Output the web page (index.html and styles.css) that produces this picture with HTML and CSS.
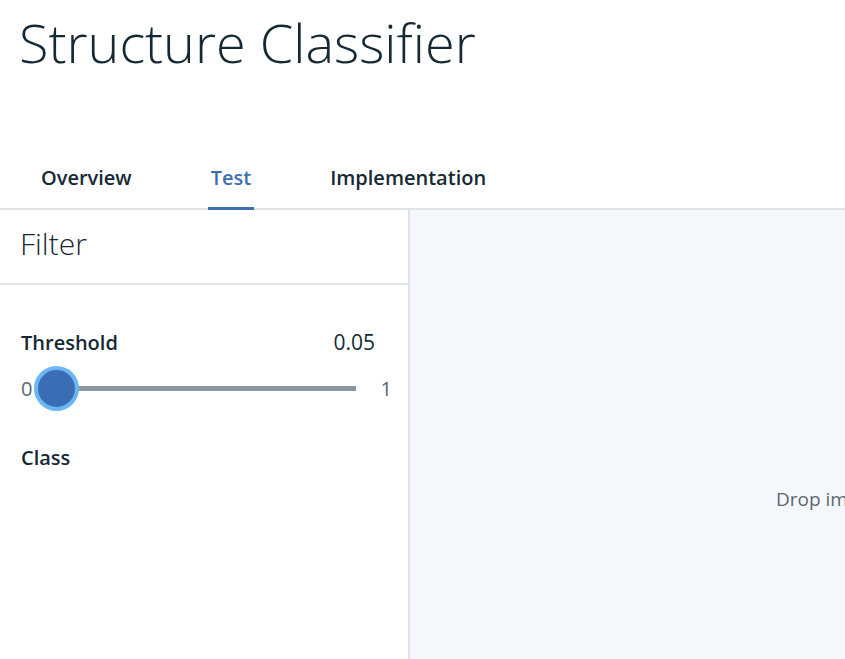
FILE: index.html
```html
<!DOCTYPE html>
<html lang="en">
<head>
<meta charset="utf-8">
<title>Structure Classifier</title>
<link rel="stylesheet" href="styles.css">
</head>
<body>
<div class="page">
  <h1 class="title">Structure Classifier</h1>
  <nav class="tabs">
    <a class="tab">Overview</a>
    <a class="tab tab-active">Test</a>
    <a class="tab">Implementation</a>
  </nav>
  <main class="main">
    <aside class="panel">
      <div class="panel-head">Filter</div>
      <div class="panel-body">
        <div class="field-row">
          <span class="field-label">Threshold</span>
          <span class="field-value">0.05</span>
        </div>
        <div class="slider">
          <span class="slider-min">0</span>
          <div class="slider-track">
            <span class="slider-thumb"></span>
          </div>
          <span class="slider-max">1</span>
        </div>
        <div class="field-label class-label">Class</div>
      </div>
    </aside>
    <section class="dropzone">
      <span class="drop-text">Drop image here</span>
    </section>
  </main>
</div>
</body>
</html>
```

FILE: styles.css
```css
html, body {
  margin: 0;
  padding: 0;
  background: #ffffff;
  overflow: hidden;
}
body {
  font-family: "Open Sans", "Noto Sans", sans-serif;
  color: #152935;
  width: 845px;
  height: 659px;
}
.page {
  display: flex;
  flex-direction: column;
  height: 659px;
}
.title {
  margin: 0;
  padding: 6px 0 0 19px;
  height: 138px;
  box-sizing: border-box;
  font-family: "Open Sans", sans-serif;
  font-weight: 300;
  font-size: 54px;
  line-height: 72px;
  letter-spacing: 0;
  color: #152935;
}
.tabs {
  display: flex;
  gap: 73px;
  padding-left: 38px;
  height: 70px;
  border-bottom: 2px solid #dfe3e6;
  box-sizing: content-box;
}
.tab {
  display: flex;
  align-items: center;
  padding: 10px 3px 0;
  font-size: 20px;
  font-weight: 600;
  color: #152935;
  border-bottom: 3px solid transparent;
  margin-bottom: -2px;
}
.tab-active {
  color: #3d70b2;
  border-bottom-color: #3d70b2;
}
.main {
  flex: 1;
  display: flex;
}
.panel {
  width: 408px;
  flex: none;
  border-right: 2px solid #dfe3e6;
  background: #ffffff;
}
.panel-head {
  height: 73px;
  border-bottom: 2px solid #dfe3e6;
  padding-left: 20px;
  font-size: 30px;
  font-weight: 300;
  line-height: 68px;
  color: #152935;
}
.panel-body {
  padding: 44px 33px 0 21px;
}
.field-row {
  display: flex;
  justify-content: space-between;
  align-items: center;
  height: 26px;
}
.field-label {
  font-size: 20px;
  font-weight: 600;
  color: #152935;
}
.field-value {
  font-size: 21px;
  font-weight: 400;
  color: #152935;
}
.slider {
  display: flex;
  align-items: center;
  height: 44px;
  margin-top: 11px;
  margin-right: -17px;
}
.slider-min, .slider-max {
  font-size: 20px;
  font-weight: 400;
  color: #5a6872;
}
.slider-min {
  width: 14px;
}
.slider-track {
  position: relative;
  width: 301px;
  height: 5px;
  margin-left: 21px;
  background: #8897a2;
}
.slider-thumb {
  position: absolute;
  left: -22px;
  top: -20px;
  width: 37px;
  height: 37px;
  border-radius: 50%;
  background: #3a6db3;
  border: 4px solid #6cb6f5;
}
.slider-max {
  margin-left: 25px;
}
.class-label {
  margin-top: 35px;
  line-height: 26px;
}
.dropzone {
  flex: 1;
  background: #f4f7fb;
  padding: 276px 0 0 366px;
  overflow: hidden;
  white-space: nowrap;
}
.drop-text {
  font-size: 19px;
  color: #5a6872;
}
```
